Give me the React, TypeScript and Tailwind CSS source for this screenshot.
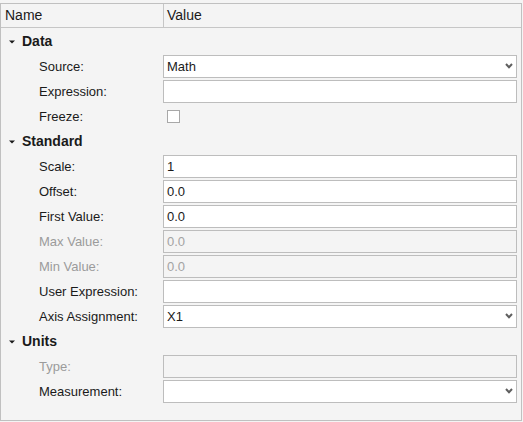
import React from "react";

const Chevron = () => (
  <svg width="8" height="6" viewBox="0 0 8 6" className="absolute right-[3px] top-[7px]">
    <polyline points="1,1 4,4.2 7,1" fill="none" stroke="#5f5f5f" strokeWidth="2" />
  </svg>
);

const Caret = () => (
  <svg width="6" height="4" viewBox="0 0 6 4" className="ml-[8px] mr-[7px]">
    <polygon points="0,0.5 6,0.5 3,3.5" fill="#1a1a1a" />
  </svg>
);

type Row =
  | { kind: "section"; label: string }
  | {
      kind: "field";
      label: string;
      value?: string;
      disabled?: boolean;
      select?: boolean;
      checkbox?: boolean;
    };

const rows: Row[] = [
  { kind: "section", label: "Data" },
  { kind: "field", label: "Source:", value: "Math", select: true },
  { kind: "field", label: "Expression:", value: "" },
  { kind: "field", label: "Freeze:", checkbox: true },
  { kind: "section", label: "Standard" },
  { kind: "field", label: "Scale:", value: "1" },
  { kind: "field", label: "Offset:", value: "0.0" },
  { kind: "field", label: "First Value:", value: "0.0" },
  { kind: "field", label: "Max Value:", value: "0.0", disabled: true },
  { kind: "field", label: "Min Value:", value: "0.0", disabled: true },
  { kind: "field", label: "User Expression:", value: "" },
  { kind: "field", label: "Axis Assignment:", value: "X1", select: true },
  { kind: "section", label: "Units" },
  { kind: "field", label: "Type:", value: "", disabled: true },
  { kind: "field", label: "Measurement:", value: "", select: true },
];

export default function App() {
  return (
    <div className="w-[523px] h-[422px] bg-[#f4f4f4] pt-[3px] font-['Liberation_Sans',Arial,sans-serif] text-[#1a1a1a]">
      <div className="w-[522px] h-[418px] border border-[#c0c0c0] flex flex-col">
        <div className="h-[24px] flex border-b border-[#c6c6c6] text-[14px]">
          <div className="w-[163px] border-r border-[#c6c6c6] pl-[4px] flex items-center">Name</div>
          <div className="pl-[3px] flex items-center">Value</div>
        </div>
        <div className="pt-[1px] flex flex-col">
          {rows.map((r, i) =>
            r.kind === "section" ? (
              <div key={i} className="h-[25px] flex items-center text-[14px] font-bold">
                <Caret />
                <span>{r.label}</span>
              </div>
            ) : (
              <div key={i} className="h-[25px] flex items-center text-[13px]">
                <div
                  className={
                    "w-[162px] pl-[38px] " + (r.disabled ? "text-[#9b9b9b]" : "text-[#1a1a1a]")
                  }
                >
                  {r.label}
                </div>
                {r.checkbox ? (
                  <div className="ml-[4px] w-[13px] h-[13px] border border-[#a8a8a8] bg-white" />
                ) : (
                  <div
                    className={
                      "relative w-[354px] h-[23px] border border-[#bdbdbd] pl-[3px] flex items-center " +
                      (r.disabled ? "bg-[#f4f4f4] text-[#a3a3a3]" : "bg-white text-[#1a1a1a]")
                    }
                  >
                    {r.value}
                    {r.select && <Chevron />}
                  </div>
                )}
              </div>
            )
          )}
        </div>
      </div>
    </div>
  );
}
